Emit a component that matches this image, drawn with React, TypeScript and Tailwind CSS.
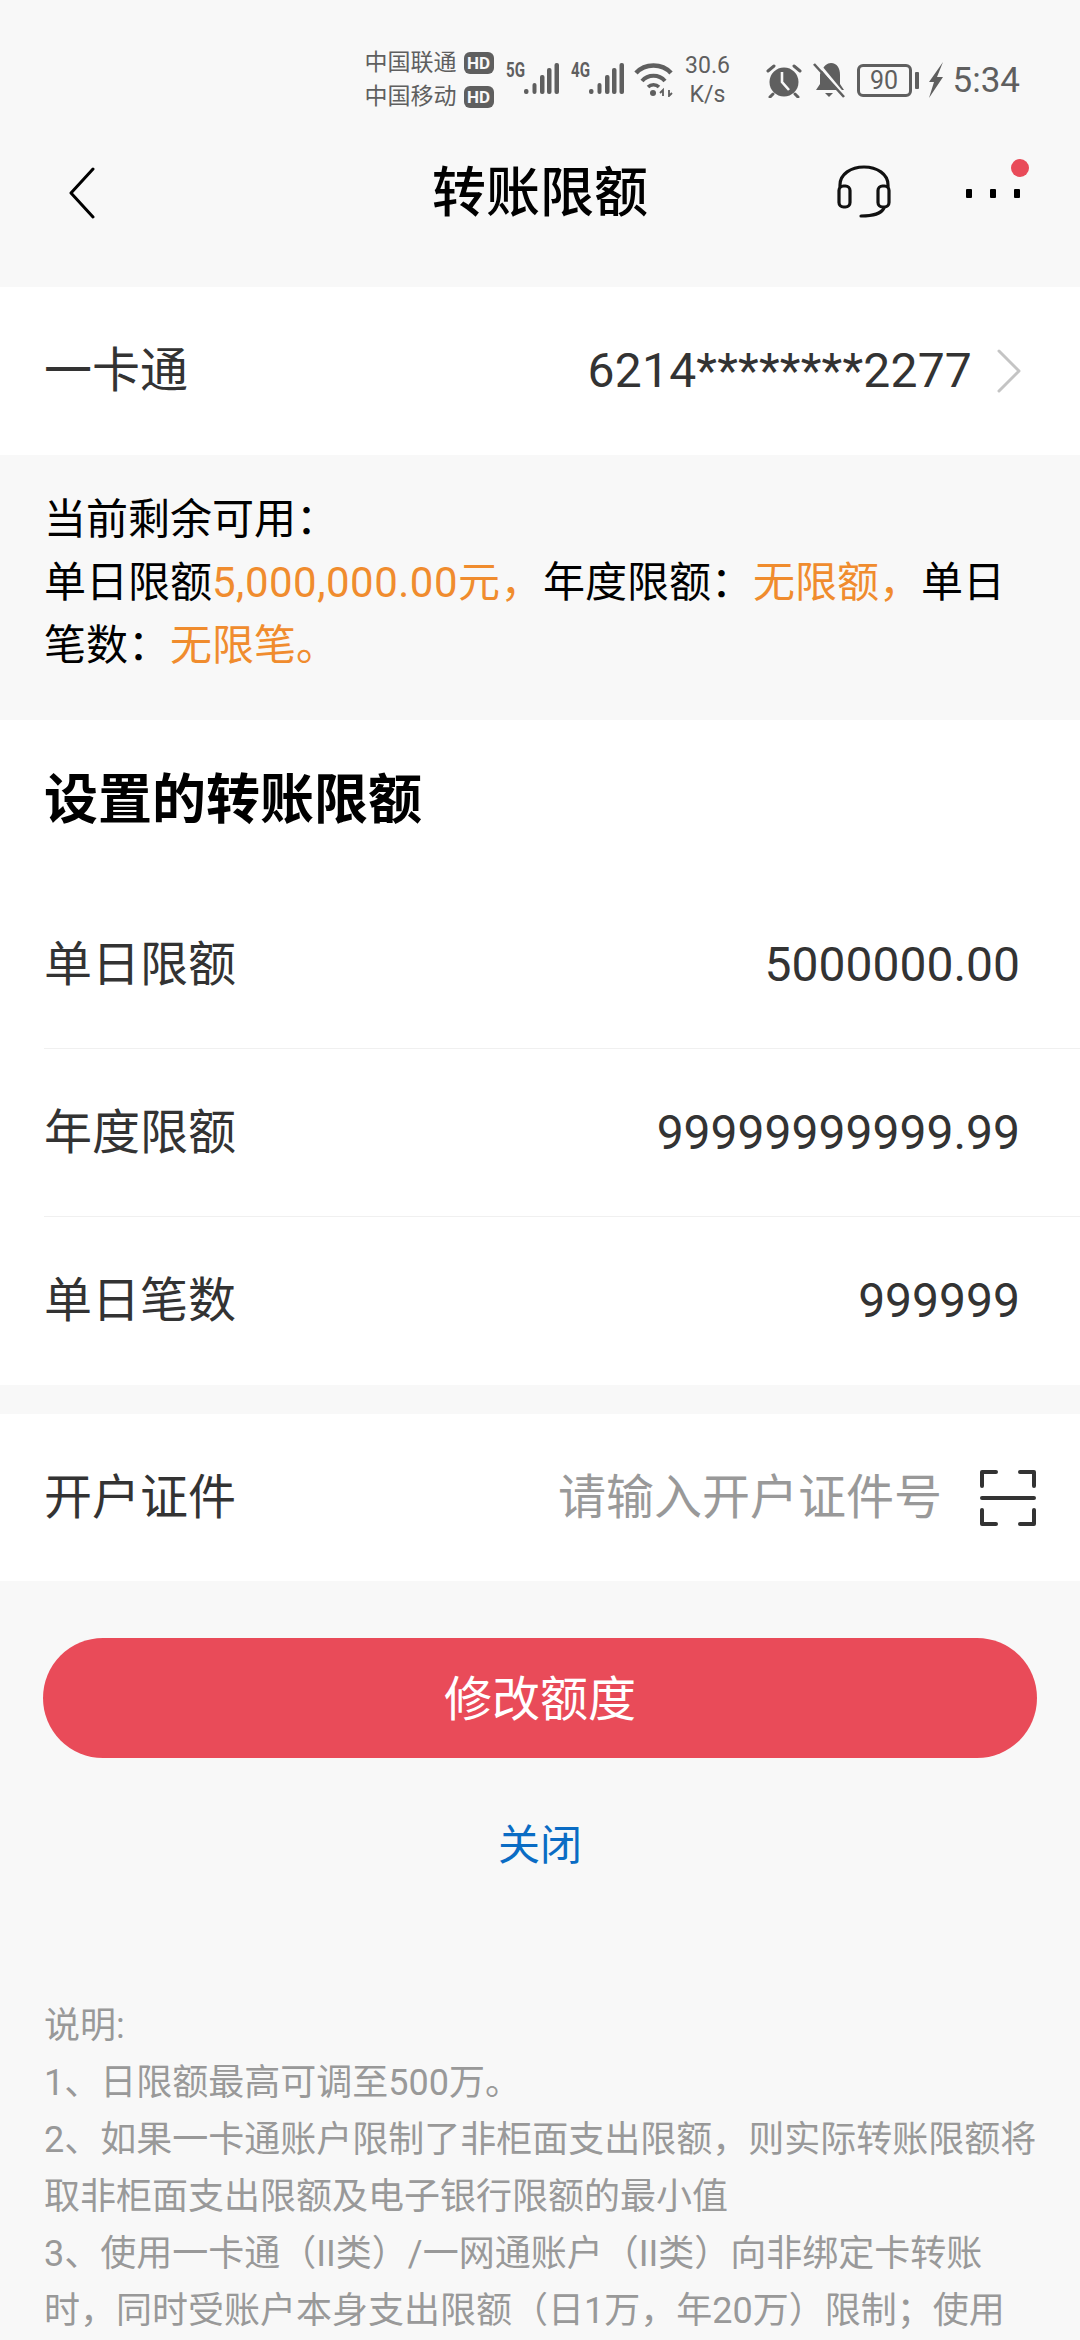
const cjk = "font-['Roboto','Noto_Sans_CJK_SC',sans-serif]"

function HdBadge() {
  return (
    <span className="flex h-[22px] w-[30px] items-center justify-center rounded-[6px] bg-[#5f5f5f] text-[17px] font-bold leading-none text-[#f8f8f8]">
      HD
    </span>
  )
}

function Signal({ label }: { label: string }) {
  return (
    <div className="relative h-[40px] w-[53px]">
      <span className="absolute left-0 top-0 origin-left scale-x-[0.72] text-[21px] font-bold leading-none text-[#5f5f5f]">{label}</span>
      <svg className="absolute left-0 top-0" width="53" height="40" viewBox="0 0 53 40" fill="#5f5f5f">
        <rect x="18" y="29" width="4.5" height="5" rx="2" />
        <rect x="26.5" y="23" width="4" height="11" rx="2" />
        <rect x="34" y="15" width="4.5" height="19" rx="2" />
        <rect x="41" y="8" width="4.5" height="26" rx="2" />
        <rect x="48.5" y="3" width="4.5" height="31" rx="2" />
      </svg>
    </div>
  )
}

function StatusBar() {
  return (
    <div className="flex h-[120px] items-center justify-end pr-[60px] pt-[40px] text-[#5f5f5f]">
      <div className="flex flex-col text-[23px] leading-[34px]">
        <div className="flex items-center gap-[7px]">中国联通<HdBadge /></div>
        <div className="flex items-center gap-[7px]">中国移动<HdBadge /></div>
      </div>
      <div className="ml-[12px] flex gap-[12px]">
        <Signal label="5G" />
        <Signal label="4G" />
      </div>
      <svg className="ml-[10px]" width="39" height="34" viewBox="0 0 39 34" fill="none" stroke="#5f5f5f">
        <path d="M2 10 C11 0 28 0 37 10" strokeWidth="4.5" />
        <path d="M8 18 C14 11 25 11 31 18" strokeWidth="4" />
        <path d="M14 24 C17 21 22 21 25 24" strokeWidth="3.5" />
        <circle cx="19" cy="30" r="3" fill="#5f5f5f" stroke="none" />
        <path d="M29 33 V27 L26 30 M35 27 V33 L38 30" strokeWidth="1.8" />
      </svg>
      <div className="ml-[12px] w-[46px] text-center text-[23px] leading-[29px]">
        <div>30.6</div>
        <div>K/s</div>
      </div>
      <svg className="ml-[35px]" width="36" height="36" viewBox="0 0 36 36">
        <circle cx="18" cy="20" r="14.5" fill="#5f5f5f" />
        <path d="M16 10 V20 L23 28" stroke="#f8f8f8" strokeWidth="2.6" fill="none" />
        <path d="M2 9 L8 4 M34 9 L28 4 M7 32 L4 35 M29 32 L32 35" stroke="#5f5f5f" strokeWidth="3" strokeLinecap="round" />
      </svg>
      <svg className="ml-[11px]" width="33" height="36" viewBox="0 0 33 36">
        <path d="M9 8 C11 4 14 1 18 1 C24 1 27 6 27 13 V22 L31 28 H3 L7 22 V12 Z" fill="#5f5f5f" />
        <path d="M12 31 H20 L16 35 Z" fill="#5f5f5f" />
        <path d="M3 -1 L31 33" stroke="#f8f8f8" strokeWidth="3" />
        <path d="M1 2 L31 35" stroke="#5f5f5f" strokeWidth="2.6" />
      </svg>
      <div className="ml-[11px] flex h-[33px] w-[55px] items-center justify-center rounded-[6px] border-[3px] border-[#5f5f5f] text-[25px] leading-none">
        90
      </div>
      <div className="ml-[3px] h-[17px] w-[4px] rounded-[1px] bg-[#5f5f5f]" />
      <svg className="ml-[10px]" width="14" height="36" viewBox="0 0 14 36" fill="#5f5f5f">
        <path d="M14 0 L0 20 H5 L0 36 L14 15 H8 Z" />
      </svg>
      <span className="ml-[10px] text-[35px] leading-none">5:34</span>
    </div>
  )
}

function NavBar() {
  return (
    <div className="relative flex h-[167px] items-start justify-between pl-[67px] pr-[60px] pt-[45px]">
      <svg width="30" height="52" viewBox="0 0 30 52" fill="none" stroke="#000" strokeWidth="3" strokeLinecap="round" strokeLinejoin="round" className="mt-[2px]">
        <path d="M26 2 L4 26 L26 50" />
      </svg>
      <div className="absolute inset-x-0 top-[34px] text-center text-[54px] font-medium leading-[80px] text-black">转账限额</div>
      <div className="relative flex items-start gap-[75px]">
        <svg width="54" height="53" viewBox="0 0 54 53" fill="none" stroke="#111" strokeWidth="3.2" strokeLinecap="round">
          <path d="M3 22 V20 C3 9 14 2 27 2 C40 2 51 9 51 20 V22" />
          <rect x="2" y="21" width="11" height="21" rx="4.5" />
          <rect x="41" y="21" width="11" height="21" rx="4.5" />
          <path d="M47 43 C44 49 37 51 24 51" />
        </svg>
        <div className="mt-[24px] flex w-[54px] justify-between">
          <span className="h-[9px] w-[6px] rounded-[1px] bg-black" />
          <span className="h-[9px] w-[6px] rounded-[1px] bg-black" />
          <span className="h-[9px] w-[6px] rounded-[1px] bg-black" />
        </div>
        <span className="absolute right-[-9px] top-[-6px] h-[18px] w-[18px] rounded-full bg-[#e94b59]" />
      </div>
    </div>
  )
}

function LimitRow({ label, value, last }: { label: string; value: string; last?: boolean }) {
  return (
    <div className={`flex h-[168px] items-center justify-between pr-[60px] ${last ? '' : 'border-b border-[#f0f0f0]'}`}>
      <span className="text-[48px] text-[#333]">{label}</span>
      <span className="text-[48px] text-[#333]">{value}</span>
    </div>
  )
}

export default function App() {
  return (
    <div className={`h-[2340px] w-[1080px] overflow-hidden bg-[#f8f8f8] ${cjk}`}>
      <StatusBar />
      <NavBar />

      <div className="flex h-[168px] items-center justify-between bg-white pl-[44px] pr-[58px]">
        <span className="text-[48px] text-[#333]">一卡通</span>
        <div className="flex items-center gap-[24px]">
          <span className="text-[48px] tracking-[0.2px] text-[#333]">6214********2277</span>
          <svg width="26" height="44" viewBox="0 0 26 44" fill="none" stroke="#c4c4c4" strokeWidth="3" strokeLinecap="round" strokeLinejoin="round">
            <path d="M3 2 L23 22 L3 42" />
          </svg>
        </div>
      </div>

      <div className="h-[265px] whitespace-nowrap px-[44px] pt-[33px] text-[42px] leading-[63px] text-black">
        <div>当前剩余可用：</div>
        <div>
          单日限额<span className="tracking-[0.5px] text-[#f08c2e]">5,000,000.00元，</span>年度限额：<span className="text-[#f08c2e]">无限额，</span>单日
        </div>
        <div>
          笔数：<span className="text-[#f08c2e]">无限笔。</span>
        </div>
      </div>

      <div className="bg-white pl-[44px]">
        <div className="flex h-[161px] items-center text-[54px] font-bold text-black">设置的转账限额</div>
        <LimitRow label="单日限额" value="5000000.00" />
        <LimitRow label="年度限额" value="99999999999.99" />
        <LimitRow label="单日笔数" value="999999" last />
      </div>

      <div className="mt-[29px] flex h-[167px] items-center justify-between bg-white pl-[44px] pr-[44px]">
        <span className="text-[48px] text-[#333]">开户证件</span>
        <div className="flex items-center gap-[38px]">
          <span className="text-[48px] text-[#999]">请输入开户证件号</span>
          <svg width="56" height="56" viewBox="0 0 56 56" fill="none" stroke="#333" strokeWidth="4" strokeLinecap="round" strokeLinejoin="round">
            <path d="M2 16 V2 H16 M40 2 H54 V16 M2 40 V54 H16 M40 54 H54 V40" />
            <path d="M2 28 H54" />
          </svg>
        </div>
      </div>

      <button className="mx-[43px] mt-[57px] flex h-[120px] w-[994px] items-center justify-center rounded-full bg-[#e94b59] pt-[4px] text-[48px] text-white">
        修改额度
      </button>

      <div className="mt-[50px] text-center text-[42px] leading-[76px] text-[#0a6cc4]">关闭</div>

      <div className="mt-[114px] whitespace-nowrap px-[44px] text-[36px] leading-[57px] text-[#999]">
        <div>说明:</div>
        <div>1、日限额最高可调至500万。</div>
        <div>2、如果一卡通账户限制了非柜面支出限额，则实际转账限额将</div>
        <div>取非柜面支出限额及电子银行限额的最小值</div>
        <div>3、使用一卡通（II类）/一网通账户（II类）向非绑定卡转账</div>
        <div>时，同时受账户本身支出限额（日1万，年20万）限制；使用</div>
      </div>
    </div>
  )
}
